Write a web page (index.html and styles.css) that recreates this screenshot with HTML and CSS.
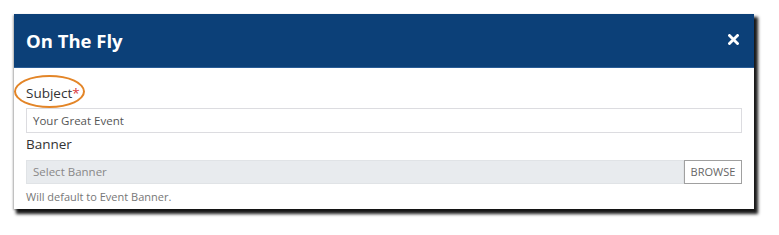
FILE: index.html
```html
<!DOCTYPE html>
<html lang="en">
<head>
<meta charset="utf-8">
<title>On The Fly</title>
<link rel="stylesheet" href="styles.css">
</head>
<body>
<div class="modal">
  <div class="modal-header">
    <h1 class="modal-title">On The Fly</h1>
    <svg class="close" width="11" height="11" viewBox="0 0 11 11" aria-label="Close">
      <path d="M1.5 1.5 L9.5 9.5 M9.5 1.5 L1.5 9.5" stroke="#fff" stroke-width="2.8" stroke-linecap="square"/>
    </svg>
  </div>
  <div class="modal-body">
    <div class="field-label subject-label">Subject<span class="req">*</span>
      <span class="highlight"></span>
    </div>
    <div class="input">Your Great Event</div>
    <div class="field-label banner-label">Banner</div>
    <div class="file-row">
      <div class="input file-input">Select Banner</div>
      <div class="browse">BROWSE</div>
    </div>
    <div class="help">Will default to Event Banner.</div>
  </div>
</div>
</body>
</html>
```
FILE: styles.css
```css
html, body {
  margin: 0;
  padding: 0;
  background: #fff;
}
body {
  font-family: "Open Sans", "Noto Sans", sans-serif;
  padding: 14px 0 0 14px;
  height: 235px;
  box-sizing: border-box;
}
.modal {
  width: 740px;
  background: #fff;
  box-shadow: 3px 4px 3px 1px rgba(0,0,0,0.9), -1px 1px 2px rgba(0,0,0,0.3);
}
.modal-header {
  height: 54px;
  background: #0c4078;
  display: flex;
  align-items: center;
  justify-content: space-between;
  padding: 0 15px 0 12px;
  box-sizing: border-box;
  border-bottom: 1px solid #2a5d96;
}
.modal-title {
  margin: 0;
  color: #fff;
  font-size: 18.5px;
  font-weight: 700;
  line-height: 24px;
  padding-top: 1px;
}
.close {
  display: block;
  margin-top: -3px;
}
.modal-body {
  padding: 14px 12px 4px 12px;
}
.field-label {
  font-size: 13.5px;
  color: #333;
  line-height: 22px;
  position: relative;
  width: max-content;
}
.req {
  color: #d9383a;
}
.highlight {
  position: absolute;
  left: -12px;
  top: -7px;
  width: 67px;
  height: 29px;
  border: 2.5px solid #e38527;
  border-radius: 50%;
}
.input {
  height: 25px;
  box-sizing: border-box;
  border: 1px solid #dcdce0;
  font-size: 11.5px;
  color: #555;
  line-height: 23px;
  padding: 0 6px;
  margin-top: 4px;
}
.banner-label {
  line-height: 20px;
  margin-top: 1px;
}
.file-row {
  display: flex;
  margin-top: 6px;
  height: 24px;
}
.file-input {
  flex: 1;
  margin: 0;
  height: 24px;
  background: #e8ebee;
  border-color: #e0e3e6;
  color: #888;
  line-height: 22px;
}
.browse {
  width: 58px;
  box-sizing: border-box;
  border: 1px solid #a0a0a0;
  background: #fff;
  font-size: 11px;
  color: #666;
  line-height: 22px;
  text-align: center;
}
.help {
  font-size: 11px;
  color: #777;
  line-height: 16px;
  margin-top: 5px;
}
```
